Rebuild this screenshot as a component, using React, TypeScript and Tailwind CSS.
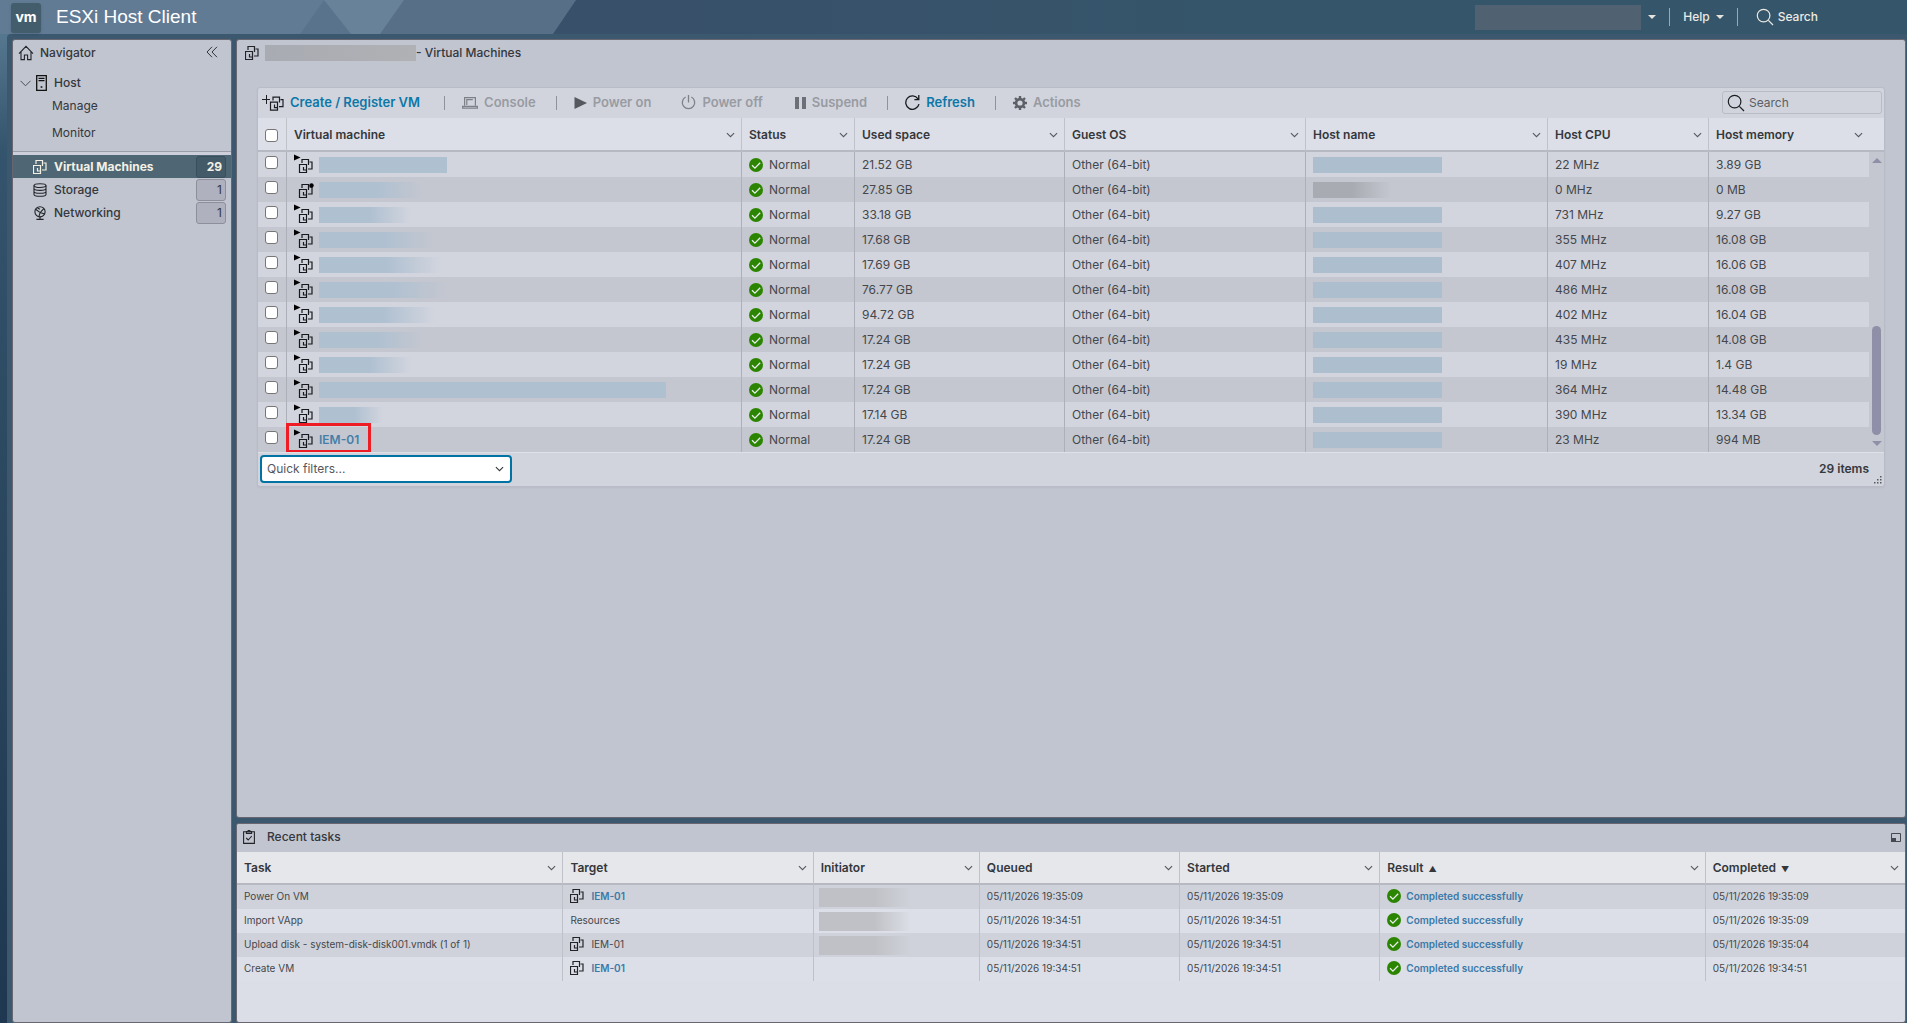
import type { ReactNode } from 'react'
import clsx from 'clsx'

type IconProps = { className?: string }

type Vm = {
  name?: string
  mask?: string
  state: 'on' | 'off'
  used: string
  hostMask: string
  cpu: string
  memory: string
}

const SOLID = 'bg-[#afc0d1]'
const FADE = 'bg-linear-to-r from-[#afc0d1] from-55% to-transparent'
const HOST = 'w-[129px] bg-[#adbfcf]'

const VMS: Vm[] = [
  { mask: `w-[128px] ${SOLID}`, state: 'on', used: '21.52 GB', hostMask: HOST, cpu: '22 MHz', memory: '3.89 GB' },
  { mask: `w-[104px] ${FADE}`, state: 'off', used: '27.85 GB', hostMask: 'w-[78px] bg-linear-to-r from-[#a9abb2] from-50% to-transparent', cpu: '0 MHz', memory: '0 MB' },
  { mask: `w-[92px] ${FADE}`, state: 'on', used: '33.18 GB', hostMask: HOST, cpu: '731 MHz', memory: '9.27 GB' },
  { mask: `w-[116px] ${FADE}`, state: 'on', used: '17.68 GB', hostMask: HOST, cpu: '355 MHz', memory: '16.08 GB' },
  { mask: `w-[122px] ${FADE}`, state: 'on', used: '17.69 GB', hostMask: HOST, cpu: '407 MHz', memory: '16.06 GB' },
  { mask: `w-[128px] ${FADE}`, state: 'on', used: '76.77 GB', hostMask: HOST, cpu: '486 MHz', memory: '16.08 GB' },
  { mask: `w-[116px] ${FADE}`, state: 'on', used: '94.72 GB', hostMask: HOST, cpu: '402 MHz', memory: '16.04 GB' },
  { mask: `w-[104px] ${FADE}`, state: 'on', used: '17.24 GB', hostMask: HOST, cpu: '435 MHz', memory: '14.08 GB' },
  { mask: `w-[92px] ${FADE}`, state: 'on', used: '17.24 GB', hostMask: HOST, cpu: '19 MHz', memory: '1.4 GB' },
  { mask: `w-[347px] ${SOLID}`, state: 'on', used: '17.24 GB', hostMask: HOST, cpu: '364 MHz', memory: '14.48 GB' },
  { mask: `w-[64px] ${FADE}`, state: 'on', used: '17.14 GB', hostMask: HOST, cpu: '390 MHz', memory: '13.34 GB' },
  { name: 'IEM-01', state: 'on', used: '17.24 GB', hostMask: HOST, cpu: '23 MHz', memory: '994 MB' },
]

const TASKS = [
  { task: 'Power On VM', target: 'IEM-01', kind: 'link', initiator: true, queued: '05/11/2026 19:35:09', started: '05/11/2026 19:35:09', completed: '05/11/2026 19:35:09' },
  { task: 'Import VApp', target: 'Resources', kind: 'text', initiator: true, queued: '05/11/2026 19:34:51', started: '05/11/2026 19:34:51', completed: '05/11/2026 19:35:09' },
  { task: 'Upload disk - system-disk-disk001.vmdk (1 of 1)', target: 'IEM-01', kind: 'vm', initiator: true, queued: '05/11/2026 19:34:51', started: '05/11/2026 19:34:51', completed: '05/11/2026 19:35:04' },
  { task: 'Create VM', target: 'IEM-01', kind: 'link', initiator: false, queued: '05/11/2026 19:34:51', started: '05/11/2026 19:34:51', completed: '05/11/2026 19:34:51' },
]

const VM_SHAPE = 'M.5 5.5h7v8h-7z M3 4V.5h6.5v5.5 M10.5 3h2.5v7H9 M4.5 8v3H7'

function VmIcon({ className }: IconProps) {
  return (
    <svg viewBox="0 0 14 14" className={clsx('w-3.5 h-3.5 shrink-0', className)} fill="none" stroke="currentColor" strokeWidth="1.2">
      <path d={VM_SHAPE} />
    </svg>
  )
}

function VmStateIcon({ state }: { state: 'on' | 'off' }) {
  return (
    <svg viewBox="0 0 20 20" className="w-5 h-5 shrink-0 text-[#16181c]" fill="none" stroke="currentColor" strokeWidth="1.2">
      <path d={VM_SHAPE} transform="translate(5 5)" />
      {state === 'on'
        ? <path d="M0 .5v6L6.5 3.5z" fill="#000" stroke="none" />
        : <circle cx="17.5" cy="6.5" r="2.2" fill="#000" stroke="none" />}
    </svg>
  )
}

function CreateVmIcon() {
  return (
    <svg viewBox="0 0 22 16" className="w-[22px] h-4 shrink-0 text-[#1c1e22]" fill="none" stroke="currentColor" strokeWidth="1.2">
      <path d={VM_SHAPE} transform="translate(8 1.6)" />
      <path d="M0 4.5h8M4.5 0v9" strokeWidth="1" />
    </svg>
  )
}

function Chevron({ className }: IconProps) {
  return (
    <svg viewBox="0 0 10 6" className={clsx('w-[9px] h-1.5 shrink-0', className)} fill="none" stroke="currentColor" strokeWidth="1.2">
      <path d="M1 .8l4 4 4-4" />
    </svg>
  )
}

function SearchIcon({ className }: IconProps) {
  return (
    <svg viewBox="0 0 18 18" className={clsx('w-[18px] h-[18px] shrink-0', className)} fill="none" stroke="currentColor" strokeWidth="1.2">
      <circle cx="7.6" cy="7.6" r="6.3" />
      <path d="M12.4 12.4l4.6 4.6" />
    </svg>
  )
}

function CheckBadge() {
  return (
    <svg viewBox="0 0 14 14" className="w-3.5 h-3.5 shrink-0">
      <circle cx="7" cy="7" r="7" fill="#2c8500" />
      <path d="M3 7.2l2.9 2.9 5.3-5.3" fill="none" stroke="#e8eef0" strokeWidth="1.3" />
    </svg>
  )
}

function HomeIcon() {
  return (
    <svg viewBox="0 0 16 16" className="w-4 h-4 shrink-0" fill="none" stroke="#222428" strokeWidth="1.1">
      <path d="M1 8.6L8 1.4l7 7.2M3 7v7.6h3.4V10h3.2v4.6H13V7" />
    </svg>
  )
}

function HostIcon() {
  return (
    <svg viewBox="0 0 11 16" className="w-[11px] h-4 shrink-0" fill="none" stroke="#111" strokeWidth="1.3">
      <path d="M.7.7h9.6v14.6H.7zM2.5 3.4h6M2.5 5.6h6" />
      <circle cx="5.5" cy="12" r="1.1" fill="#333" stroke="none" />
    </svg>
  )
}

function StorageIcon() {
  return (
    <svg viewBox="0 0 14 14" className="w-3.5 h-3.5 shrink-0" fill="none" stroke="#222428" strokeWidth="1.1">
      <ellipse cx="7" cy="2.6" rx="6" ry="1.9" />
      <path d="M1 2.6v8.8c0 1 2.7 1.9 6 1.9s6-.9 6-1.9V2.6M1 5.5c0 1 2.7 1.9 6 1.9s6-.9 6-1.9M1 8.4c0 1 2.7 1.9 6 1.9s6-.9 6-1.9" />
    </svg>
  )
}

function NetworkIcon() {
  return (
    <svg viewBox="0 0 14 14" className="w-3.5 h-3.5 shrink-0" fill="none" stroke="#222428" strokeWidth="1.1">
      <circle cx="7" cy="5.8" r="5.1" />
      <path d="M2.6 3.2l4.6 3.4 3.6-4M7.2 6.6l-1.4 4M7.2 6.6l4.4 1.4M4.4 1.8l2.4 1.4M7 11v2M3.4 13.4h7.2" />
    </svg>
  )
}

function CollapseIcon() {
  return (
    <svg viewBox="0 0 12 12" className="w-3 h-3" fill="none" stroke="#33363c" strokeWidth="1">
      <path d="M6 .8L1 6l5 5.2M11 .8L6 6l5 5.2" />
    </svg>
  )
}

function ConsoleIcon() {
  return (
    <svg viewBox="0 0 16 14" className="w-4 h-3.5 shrink-0" fill="none" stroke="#7d8087" strokeWidth="1.2">
      <path d="M2.6 9.6V1.6h10.8v8M4.8 9V3.6h6M.6 10.4h14.8v1.8H.6z" />
    </svg>
  )
}

function PlayIcon() {
  return (
    <svg viewBox="0 0 13 12" className="w-[13px] h-3 shrink-0" fill="#55585e">
      <path d="M.5 0v12L13 6z" />
    </svg>
  )
}

function PowerIcon() {
  return (
    <svg viewBox="0 0 15 15" className="w-[15px] h-[15px] shrink-0" fill="none" stroke="#7d8087" strokeWidth="1.3">
      <path d="M4.6 2a6.2 6.2 0 1 0 5.8 0M7.5 0v7.4" />
    </svg>
  )
}

function PauseIcon() {
  return (
    <svg viewBox="0 0 11 12" className="w-[11px] h-3 shrink-0" fill="#6d7076">
      <path d="M0 0h4v12H0zM7 0h4v12H7z" />
    </svg>
  )
}

function RefreshIcon() {
  return (
    <svg viewBox="0 0 15 15" className="w-[15px] h-[15px] shrink-0" fill="none" stroke="#16181c" strokeWidth="1.3">
      <path d="M14 9.2A6.7 6.7 0 1 1 13 3.8M13.8 0v4.6H9.4" />
    </svg>
  )
}

function GearIcon() {
  return (
    <svg viewBox="0 0 14 14" className="w-3.5 h-3.5 shrink-0" fill="none" stroke="#5d6066">
      <circle cx="7" cy="7" r="3.9" strokeWidth="2.6" />
      <path d="M7 0v2.2M7 11.8V14M0 7h2.2M11.8 7H14M2 2l1.6 1.6M10.4 10.4L12 12M12 2l-1.6 1.6M3.6 10.4L2 12" strokeWidth="2.4" />
    </svg>
  )
}

function TasksIcon() {
  return (
    <svg viewBox="0 0 12 14" className="w-3 h-3.5 shrink-0" fill="none" stroke="#222428" strokeWidth="1.1">
      <path d="M.6 1.8h10.8v11.6H.6zM3.4 3.4V1.6h1.4a1.2 1.2 0 0 1 2.4 0h1.4v1.8zM3.2 8l2 2 3.6-4" />
    </svg>
  )
}

function Caret() {
  return (
    <svg viewBox="0 0 8 4" className="w-2 h-1 shrink-0" fill="#e6e4df">
      <path d="M0 0h8L4 4z" />
    </svg>
  )
}

function Tick({ label, className }: { label: string; className?: string }) {
  return (
    <input
      type="checkbox"
      aria-label={label}
      className={clsx('appearance-none block w-[13px] h-[13px] ml-[7px] bg-white border border-[#767676] rounded-[3px]', className)}
    />
  )
}

function TopBar() {
  return (
    <header className="relative h-[34px] shrink-0 flex items-center justify-between bg-linear-to-r from-[#38506a] from-35% to-[#35556a] to-65% text-[#eceae4]">
      <svg viewBox="0 0 576 34" className="absolute left-0 top-0 w-[576px] h-[34px]">
        <path d="M0 0h576l-23 34H0z" fill="#576f87" />
        <path d="M0 0h404l-24 34H0z" fill="#68829a" />
        <path d="M0 0h324l-24 34H0z" fill="#617b95" />
        <path d="M324 0l27 34h-51z" fill="#5a738c" />
      </svg>
      <div className="relative flex items-center gap-[15px] pl-[11px]">
        <div className="w-[30px] h-[30px] mt-0.5 rounded-[3px] bg-[#445d6d] shadow-sm flex items-center justify-center pb-0.5 text-[14px] leading-none font-bold text-white">
          vm
        </div>
        <h1 className="font-['Liberation_Sans',sans-serif] text-[19px] leading-6 pb-px text-white">ESXi Host Client</h1>
      </div>
      <div className="relative flex items-center pr-[89px] text-[12px] font-medium">
        <button type="button" aria-label="User menu" className="flex items-center gap-[7px]">
          <span className="w-[166px] h-[25px] bg-[#506172]" />
          <Caret />
        </button>
        <span className="w-px h-[18px] mx-[13px] bg-[#9aa9b5]" />
        <button type="button" className="flex items-center gap-1.5">
          Help
          <Caret />
        </button>
        <span className="w-px h-[18px] ml-[13px] mr-[18px] bg-[#9aa9b5]" />
        <button type="button" className="flex items-center gap-1">
          <SearchIcon />
          Search
        </button>
      </div>
    </header>
  )
}

function NavItem({ icon, label, count, active }: { icon: ReactNode; label: string; count: number; active?: boolean }) {
  return (
    <a
      href="#"
      className={clsx(
        'flex items-center gap-[7px] h-[23px] pl-5 pr-[5px] text-[12px]',
        active ? 'bg-[#4f6775] text-[#f3f1e4] font-bold' : 'text-[#34373c] font-medium',
      )}
    >
      {icon}
      <span className="flex-1">{label}</span>
      <span
        className={clsx(
          'w-[30px] h-[22px] pr-[3px] flex items-center justify-end rounded-[3px] border',
          active ? 'bg-[#435a69] border-[#3a4f5d]' : 'bg-[#afb2be] border-[#8d909b] font-normal',
        )}
      >
        {count}
      </span>
    </a>
  )
}

function Navigator() {
  return (
    <nav className="w-[220px] shrink-0 bg-[#c1c5d0] border border-[#676671] rounded-[3px] text-[12px] text-[#34373c]">
      <div className="flex items-center gap-1.5 h-[26px] px-[5px] mb-[7px] font-medium">
        <HomeIcon />
        <span className="flex-1">Navigator</span>
        <button type="button" aria-label="Collapse navigator" className="pr-2 pb-0.5">
          <CollapseIcon />
        </button>
      </div>
      <div className="border-b border-[#9b9eaa] pb-1">
        <a href="#" className="flex items-center gap-[5px] h-5 pl-[7px] font-medium">
          <svg viewBox="0 0 11 7" className="w-[11px] h-[7px]" fill="none" stroke="#4a4d53"><path d="M.5.8l5 5 5-5" /></svg>
          <HostIcon />
          <span className="pl-0.5">Host</span>
        </a>
        <a href="#" className="flex items-center h-[26px] pl-[39px]">Manage</a>
        <a href="#" className="flex items-center h-7 pl-[39px]">Monitor</a>
      </div>
      <div className="h-[3px] bg-[#cdd0da]" />
      <NavItem icon={<VmIcon />} label="Virtual Machines" count={29} active />
      <NavItem icon={<StorageIcon />} label="Storage" count={1} />
      <NavItem icon={<NetworkIcon />} label="Networking" count={1} />
    </nav>
  )
}

function ToolButton({ icon, label, enabled, className }: { icon: ReactNode; label: string; enabled?: boolean; className?: string }) {
  return (
    <button
      type="button"
      disabled={!enabled}
      className={clsx('flex items-center gap-1.5 font-semibold whitespace-nowrap', enabled ? 'text-[#0c78a8]' : 'text-[#989ba2]', className)}
    >
      {icon}
      {label}
    </button>
  )
}

function Separator() {
  return <span className="w-px h-3.5 ml-5 mr-[17px] bg-[#8f9299]" />
}

function Toolbar() {
  return (
    <div className="flex items-center h-[30px] pl-1 pr-0.5 pb-px text-[13px]">
      <ToolButton icon={<CreateVmIcon />} label="Create / Register VM" enabled className="pr-1" />
      <Separator />
      <ToolButton icon={<ConsoleIcon />} label="Console" />
      <Separator />
      <ToolButton icon={<PlayIcon />} label="Power on" className="pr-[30px]" />
      <ToolButton icon={<PowerIcon />} label="Power off" className="pr-8" />
      <ToolButton icon={<PauseIcon />} label="Suspend" />
      <Separator />
      <ToolButton icon={<RefreshIcon />} label="Refresh" enabled />
      <Separator />
      <ToolButton icon={<GearIcon />} label="Actions" />
      <label className="ml-auto flex items-center gap-1 w-[160px] h-[23px] pl-1 border border-[#b9bcc6] rounded-[3px] text-[12px]">
        <SearchIcon className="text-[#1c1e22]" />
        <input type="text" placeholder="Search" aria-label="Search virtual machines" className="w-full bg-transparent outline-none placeholder:text-[#5c5f65]" />
      </label>
    </div>
  )
}

function HeadCell({ label, mark, span, wide }: { label: string; mark?: string; span?: number; wide?: boolean }) {
  return (
    <th scope="col" colSpan={span} className="p-0 border-l first:border-l-0 border-[#c0c2ca] border-b-2 border-b-[#b6b9c2] font-semibold text-left">
      <div className={clsx('flex items-center pl-[7px] pt-px', wide ? 'pr-[21px]' : 'pr-1.5')}>
        <span className="flex-1">
          {label}
          {mark && <span className="pl-[5px] text-[8px]">{mark}</span>}
        </span>
        <Chevron className="text-[#55585e]" />
      </div>
    </th>
  )
}

function VmTable() {
  const cell = 'p-0 pl-[7px] border-l border-[#adb0b9]'
  return (
    <table className="w-full table-fixed border-separate border-spacing-0 text-[12px] text-[#44474c]">
      <colgroup>
        <col className="w-[28px]" />
        <col className="w-[455px]" />
        <col className="w-[113px]" />
        <col className="w-[210px]" />
        <col className="w-[241px]" />
        <col className="w-[242px]" />
        <col className="w-[161px]" />
        <col className="w-[161px]" />
        <col className="w-[15px]" />
      </colgroup>
      <thead>
        <tr className="h-[34px] bg-[#dcdfe7] text-[#34373c]">
          <th scope="col" className="p-0 border-b-2 border-b-[#b6b9c2]">
            <Tick label="Select all" className="mt-0.5" />
          </th>
          <HeadCell label="Virtual machine" />
          <HeadCell label="Status" />
          <HeadCell label="Used space" />
          <HeadCell label="Guest OS" />
          <HeadCell label="Host name" />
          <HeadCell label="Host CPU" />
          <HeadCell label="Host memory" span={2} wide />
        </tr>
      </thead>
      <tbody>
        {VMS.map((vm, i) => (
          <tr key={i} className="h-[25px] odd:bg-[#d2d5de] even:bg-[#c4c7d0]">
            <td className="p-0">
              <Tick label={`Select row ${i + 1}`} className="mb-1" />
            </td>
            <td className={clsx(cell, 'relative')}>
              <div className="flex items-center gap-[5px]">
                <span className="pb-0.5"><VmStateIcon state={vm.state} /></span>
                {vm.name
                  ? <a href="#" className="text-[12px] leading-5 font-semibold text-[#457fa8]">{vm.name}</a>
                  : <span className={clsx('h-4', vm.mask)} />}
              </div>
              {vm.name && <span className="absolute -left-px -top-1 w-[85px] h-[30px] border-3 border-[#ee1c25]" />}
            </td>
            <td className={cell}>
              <div className="flex items-center gap-1.5"><CheckBadge />Normal</div>
            </td>
            <td className={cell}>{vm.used}</td>
            <td className={cell}>Other (64-bit)</td>
            <td className={cell}><span className={clsx('block h-4', vm.hostMask)} /></td>
            <td className={cell}>{vm.cpu}</td>
            <td className={cell}>{vm.memory}</td>
            {i === 0 && (
              <td rowSpan={VMS.length} className="p-0 bg-[#c4c7d0]">
                <div className="h-[300px] py-1.5 flex flex-col items-center">
                  <svg viewBox="0 0 10 5" className="w-2.5 h-[5px]" fill="#8f8fa8"><path d="M0 5h10L5 0z" /></svg>
                  <span className="mt-auto mb-1.5 w-[9px] h-[109px] rounded-full bg-[#8f8fa8]" />
                  <svg viewBox="0 0 10 5" className="w-2.5 h-[5px]" fill="#8f8fa8"><path d="M0 0h10L5 5z" /></svg>
                </div>
              </td>
            )}
          </tr>
        ))}
      </tbody>
    </table>
  )
}

function VmGrid() {
  return (
    <section className="mx-5 bg-[#d1d4dd] border border-[#b9bcc7] rounded-[3px] shadow-xs">
      <Toolbar />
      <VmTable />
      <div className="relative flex items-center justify-between h-[34px] border-t border-[#dfe1e8] pl-0.5 pr-[15px] pb-px text-[12px]">
        <div className="relative">
          <select aria-label="Quick filters" className="appearance-none block w-[252px] h-7 pl-[5px] bg-white border-2 border-[#0072a3] rounded-[4px] text-[#55585e]">
            <option>Quick filters...</option>
          </select>
          <Chevron className="absolute right-2 top-[11px] text-[#34373c] pointer-events-none" />
        </div>
        <span className="font-semibold text-[#34373c]">29 items</span>
        <svg viewBox="0 0 8 8" className="absolute right-0.5 bottom-0.5 w-2 h-2" fill="#55585e">
          <path d="M6 0h1.5v1.5H6zM6 3h1.5v1.5H6zM6 6h1.5v1.5H6zM3 3h1.5v1.5H3zM3 6h1.5v1.5H3zM0 6h1.5v1.5H0z" />
        </svg>
      </div>
    </section>
  )
}

function RecentTasks() {
  const cell = 'p-0 pl-[7px] pb-0.5 border-l first:border-l-0 border-[#bfc1c8]'
  return (
    <section className="h-[200px] shrink-0 bg-[#dbdee6] border border-[#676671] rounded-[3px] overflow-hidden">
      <div className="flex items-center gap-3 h-7 pl-1.5 pr-1 pb-0.5 bg-[#c1c5d0] text-[12px] font-medium text-[#34373c]">
        <TasksIcon />
        <h2 className="flex-1">Recent tasks</h2>
        <button type="button" aria-label="Minimize recent tasks">
          <svg viewBox="0 0 10 9" className="w-2.5 h-[9px]" fill="none" stroke="#45484f">
            <path d="M.5.5h9v8h-9z" />
            <path d="M0 5h5v4H0z" fill="#45484f" stroke="none" />
          </svg>
        </button>
      </div>
      <table className="w-full table-fixed border-separate border-spacing-0 text-[10px] text-[#44474c]">
        <colgroup>
          <col className="w-[325px]" />
          <col className="w-[250px]" />
          <col className="w-[166px]" />
          <col className="w-[200px]" />
          <col className="w-[200px]" />
          <col className="w-[325px]" />
          <col className="w-[200px]" />
        </colgroup>
        <thead>
          <tr className="h-[33px] bg-[#e6e7eb] text-[12px] text-[#34373c]">
            <HeadCell label="Task" />
            <HeadCell label="Target" />
            <HeadCell label="Initiator" />
            <HeadCell label="Queued" />
            <HeadCell label="Started" />
            <HeadCell label="Result" mark="▲" />
            <HeadCell label="Completed" mark="▼" />
          </tr>
        </thead>
        <tbody>
          {TASKS.map((t) => (
            <tr key={t.task} className="h-6 odd:bg-[#cfd2da] even:bg-[#dcdfe7]">
              <td className={cell}>{t.task}</td>
              <td className={cell}>
                <div className="flex items-center gap-[7px]">
                  {t.kind !== 'text' && <VmIcon className="text-[#222428]" />}
                  {t.kind === 'link'
                    ? <a href="#" className="font-semibold text-[#3b79a8]">{t.target}</a>
                    : t.target}
                </div>
              </td>
              <td className="p-0 pl-[5px] border-l border-[#bfc1c8]">
                {t.initiator && <span className="block w-[92px] h-[19px] bg-linear-to-r from-[#c0c1c6] from-60% to-transparent" />}
              </td>
              <td className={cell}>{t.queued}</td>
              <td className={cell}>{t.started}</td>
              <td className={cell}>
                <div className="flex items-center gap-[5px]">
                  <CheckBadge />
                  <a href="#" className="font-semibold text-[#3b79a8]">Completed successfully</a>
                </div>
              </td>
              <td className={cell}>{t.completed}</td>
            </tr>
          ))}
        </tbody>
      </table>
    </section>
  )
}

export default function App() {
  return (
    <div className="h-screen flex flex-col overflow-hidden bg-linear-to-b from-[#5f8299] via-[#34536c] via-15% to-[#1f3750] font-['Inter',sans-serif]">
      <TopBar />
      <div className="flex-1 min-h-0 flex gap-1 ml-[7px] pl-[5px] pr-px pt-[5px] bg-[#3b586e] rounded-tl-[4px]">
        <Navigator />
        <div className="flex-1 min-w-0 flex flex-col gap-[5px]">
          <main className="flex-1 min-h-0 bg-[#c1c5d0] border border-[#676671] rounded-[3px]">
            <div className="flex items-center h-[26px] pl-2 mb-[21px] text-[12px] font-medium text-[#34373c]">
              <VmIcon className="text-[#222428]" />
              <span className="w-[151px] h-4 ml-1.5 bg-linear-to-r from-[#a9abb3] to-[#b0b1b4]" />
              <h2>- Virtual Machines</h2>
            </div>
            <VmGrid />
          </main>
          <RecentTasks />
        </div>
      </div>
    </div>
  )
}
